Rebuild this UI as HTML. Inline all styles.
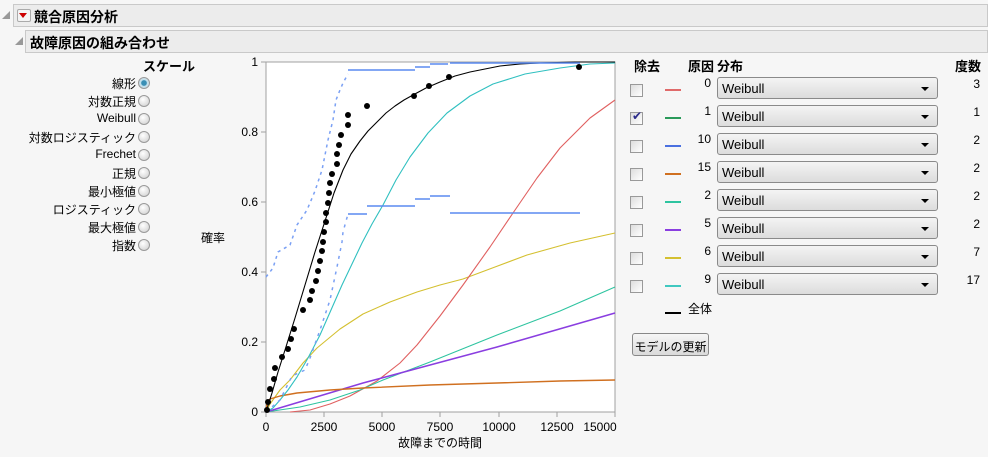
<!DOCTYPE html>
<html><head><meta charset="utf-8"><style>
body{margin:0;width:988px;height:457px;background:#f6f6f6;font-family:"Liberation Sans","Noto Sans CJK JP",sans-serif;font-size:12px;color:#000;position:relative;overflow:hidden}
.a{position:absolute;white-space:nowrap}
.hdr{position:absolute;background:#ececec;border:1px solid #c9c9c9;font-weight:bold;font-size:14px;box-sizing:border-box}
.tri{position:absolute;width:0;height:0;border-left:8px solid transparent;border-bottom:8px solid #999}
.lab{position:absolute;right:852px;text-align:right;white-space:nowrap}
.rad{position:absolute;left:138px;width:10px;height:10px;border-radius:50%;border:1px solid #9a9a9a;background:radial-gradient(circle at 40% 35%,#fff,#ccc)}
.dd{position:absolute;left:717px;width:221px;height:22px;box-sizing:border-box;border:1px solid #8a8a8a;border-radius:3px;background:linear-gradient(#f4f4f4,#dcdcdc);padding:3px 0 0 4px;font-size:13px}
.dd:after{content:"";position:absolute;right:8px;top:9px;border-left:4px solid transparent;border-right:4px solid transparent;border-top:4px solid #000}
.cb{position:absolute;left:630px;width:11px;height:11px;border:1px solid #999;background:linear-gradient(135deg,#ddd,#fff)}
.ln{position:absolute;left:665px;width:16px;height:2px}
.num{position:absolute;right:277px;text-align:right}
.cnt{position:absolute;right:8px;text-align:right}
</style></head><body>
<div class="tri" style="left:2px;top:11px"></div>
<div class="hdr" style="left:13px;top:4px;width:975px;height:23px;padding:2px 0 0 20px">競合原因分析</div>
<div class="a" style="left:17px;top:9px;width:12px;height:11px;border:1px solid #aaa;border-radius:2px;background:#f4f4f4"></div>
<div class="a" style="left:19px;top:13px;border-left:4px solid transparent;border-right:4px solid transparent;border-top:5px solid #c00"></div>
<div class="tri" style="left:15px;top:37px"></div>
<div class="hdr" style="left:25px;top:30px;width:963px;height:23px;padding:2px 0 0 4px">故障原因の組み合わせ</div>

<div class="a" style="left:143px;top:56px;font-weight:bold;font-size:13px">スケール</div>
<div class="lab" style="top:75px">線形</div><div class="rad" style="top:77px;background:radial-gradient(circle,#3a8fb5 35%,#bfe0ee 45%,#ddd)"></div>
<div class="lab" style="top:93px">対数正規</div><div class="rad" style="top:95px"></div>
<div class="lab" style="top:111px">Weibull</div><div class="rad" style="top:113px"></div>
<div class="lab" style="top:129px">対数ロジスティック</div><div class="rad" style="top:131px"></div>
<div class="lab" style="top:147px">Frechet</div><div class="rad" style="top:149px"></div>
<div class="lab" style="top:165px">正規</div><div class="rad" style="top:167px"></div>
<div class="lab" style="top:183px">最小極値</div><div class="rad" style="top:185px"></div>
<div class="lab" style="top:201px">ロジスティック</div><div class="rad" style="top:203px"></div>
<div class="lab" style="top:219px">最大極値</div><div class="rad" style="top:221px"></div>
<div class="lab" style="top:237px">指数</div><div class="rad" style="top:239px"></div>
<div class="a" style="left:201px;top:229px">確率</div>

<svg class="a" style="left:0;top:0" width="988" height="457" font-family="Liberation Sans, sans-serif" font-size="12">
<rect x="266" y="62" width="349" height="350" fill="#fff" stroke="#a0a0a0"/>
<g stroke="#a0a0a0"><line x1="261" y1="62" x2="266" y2="62"/><line x1="261" y1="132" x2="266" y2="132"/><line x1="261" y1="202" x2="266" y2="202"/><line x1="261" y1="272" x2="266" y2="272"/><line x1="261" y1="342" x2="266" y2="342"/><line x1="261" y1="412" x2="266" y2="412"/>
<line x1="266" y1="412" x2="266" y2="417"/><line x1="324" y1="412" x2="324" y2="417"/><line x1="382" y1="412" x2="382" y2="417"/><line x1="440" y1="412" x2="440" y2="417"/><line x1="499" y1="412" x2="499" y2="417"/><line x1="557" y1="412" x2="557" y2="417"/><line x1="615" y1="412" x2="615" y2="417"/></g>
<g text-anchor="end"><text x="258" y="66">1</text><text x="258" y="136">0.8</text><text x="258" y="206">0.6</text><text x="258" y="276">0.4</text><text x="258" y="346">0.2</text><text x="258" y="416">0</text></g>
<g text-anchor="middle"><text x="266" y="431">0</text><text x="324" y="431">2500</text><text x="382" y="431">5000</text><text x="440" y="431">7500</text><text x="499" y="431">10000</text><text x="557" y="431">12500</text><text x="600" y="431">15000</text>
<text x="440" y="447" font-family="Liberation Sans, Noto Sans CJK JP, sans-serif">故障までの時間</text></g>
<g fill="none" stroke-width="1.1" stroke-linejoin="round">
<polyline stroke="#d4c030" points="266,412 270,404 280,390 290,380 303,363 317,348 340,329 363,314 390,302 417,292 440,285 463,279 495,267 527,255 570,243 615,233"/>
<polyline stroke="#e06060" points="290,412 310,410 330,404 350,396 377,381 400,363 417,345 440,316 463,285 490,247 513,213 537,178 560,148 590,118 615,100"/>
<polyline stroke="#2ec4a0" points="266,412 300,407 330,400 360,390 383,380 430,362 497,335 560,311 615,287"/>
<polyline stroke="#8a3ee0" stroke-width="1.6" points="266,412 363,383 497,347 615,313"/>
<polyline stroke="#d07020" stroke-width="1.4" points="266,410 267,404 270,399 280,396 297,393 330,390 363,388 430,385 497,383 560,381 615,380"/>
<polyline stroke="#30c0c0" points="266,412 273,408 280,400 288,390 297,377 308,358 320,335 331,310 342,285 352,264 362,243 372,224 383,205 396,180 410,157 428,133 447,113 470,96 493,84 525,74 560,68 590,64 615,63"/>
<polyline stroke="#000" points="266,412 272,393 278,372 285,350 295,318 305,285 315,252 325,221 334,193 343,170 351,154 360,141 368,131 377,122 386,113 395,106 404,100 413,95 426,88 440,82 455,76 470,72 485,69 500,66 520,64 540,63 575,62 615,62"/>
</g>
<g stroke="#5a8af0" stroke-width="1.5" fill="none">
<polyline stroke-dasharray="3,4" stroke="#7aa0f4" points="266,277 273,268 278,252 290,245 297,225 307,210 315,191 322,170 328,140 333,120 336,100 340,90 343,83 348,74"/>
<line x1="348" y1="70" x2="415" y2="70"/><line x1="415" y1="67" x2="430" y2="67"/><line x1="430" y1="64" x2="448" y2="64"/><line x1="450" y1="63" x2="580" y2="63"/>
<polyline stroke-dasharray="3,5" stroke="#7aa0f4" points="266,412 280,400 292,376 305,370 310,358 320,330 330,300 337,267 342,242 343,232 348,214"/>
<line x1="348" y1="214" x2="367" y2="214"/><line x1="367" y1="206" x2="415" y2="206"/><line x1="415" y1="199" x2="430" y2="199"/><line x1="430" y1="196" x2="450" y2="196"/><line x1="450" y1="213" x2="580" y2="213"/>
</g>
<g fill="#000">
<circle cx="367" cy="106" r="3"/><circle cx="414" cy="96" r="3"/><circle cx="429" cy="86" r="3"/><circle cx="449" cy="77" r="3"/><circle cx="579" cy="67" r="3"/>
<circle cx="348" cy="115" r="3"/><circle cx="348" cy="125" r="3"/><circle cx="341" cy="135" r="3"/><circle cx="339" cy="145" r="3"/><circle cx="337" cy="154" r="3"/><circle cx="337" cy="164" r="3"/><circle cx="332" cy="174" r="3"/><circle cx="330" cy="183" r="3"/><circle cx="329" cy="193" r="3"/><circle cx="328" cy="203" r="3"/><circle cx="326" cy="213" r="3"/><circle cx="326" cy="222" r="3"/><circle cx="324" cy="232" r="3"/><circle cx="323" cy="242" r="3"/><circle cx="322" cy="251" r="3"/><circle cx="320" cy="261" r="3"/><circle cx="318" cy="271" r="3"/><circle cx="316" cy="281" r="3"/><circle cx="312" cy="291" r="3"/><circle cx="310" cy="300" r="3"/><circle cx="303" cy="310" r="3"/><circle cx="294" cy="329" r="3"/><circle cx="291" cy="339" r="3"/><circle cx="288" cy="349" r="3"/><circle cx="282" cy="357" r="3"/><circle cx="275" cy="368" r="3"/><circle cx="274" cy="379" r="3"/><circle cx="270" cy="389" r="3"/><circle cx="268" cy="402" r="3"/><circle cx="267" cy="410" r="3"/>
</g>
</svg>

<div class="a" style="left:634px;top:56px;font-weight:bold;font-size:13px">除去</div>
<div class="a" style="left:688px;top:56px;font-weight:bold;font-size:13px">原因</div>
<div class="a" style="left:717px;top:56px;font-weight:bold;font-size:13px">分布</div>
<div class="a" style="left:955px;top:56px;font-weight:bold;font-size:13px">度数</div>

<div class="cb" style="top:84px"></div><div class="ln" style="top:89px;background:#e06a6a"></div><div class="num" style="top:76px">0</div><div class="dd" style="top:77px">Weibull</div><div class="cnt" style="top:77px">3</div>
<div class="cb" style="top:112px"></div><div class="a" style="left:632px;top:109px;color:#2a2a8a;font-size:12px">✔</div><div class="ln" style="top:117px;background:#2a9a5a"></div><div class="num" style="top:104px">1</div><div class="dd" style="top:105px">Weibull</div><div class="cnt" style="top:105px">1</div>
<div class="cb" style="top:140px"></div><div class="ln" style="top:145px;background:#4a70e0"></div><div class="num" style="top:132px">10</div><div class="dd" style="top:133px">Weibull</div><div class="cnt" style="top:133px">2</div>
<div class="cb" style="top:168px"></div><div class="ln" style="top:173px;background:#d07020"></div><div class="num" style="top:160px">15</div><div class="dd" style="top:161px">Weibull</div><div class="cnt" style="top:161px">2</div>
<div class="cb" style="top:196px"></div><div class="ln" style="top:201px;background:#2ec4a0"></div><div class="num" style="top:188px">2</div><div class="dd" style="top:189px">Weibull</div><div class="cnt" style="top:189px">2</div>
<div class="cb" style="top:224px"></div><div class="ln" style="top:229px;background:#8a3ee0"></div><div class="num" style="top:216px">5</div><div class="dd" style="top:217px">Weibull</div><div class="cnt" style="top:217px">2</div>
<div class="cb" style="top:252px"></div><div class="ln" style="top:257px;background:#d4c030"></div><div class="num" style="top:244px">6</div><div class="dd" style="top:245px">Weibull</div><div class="cnt" style="top:245px">7</div>
<div class="cb" style="top:280px"></div><div class="ln" style="top:285px;background:#40c8c0"></div><div class="num" style="top:272px">9</div><div class="dd" style="top:273px">Weibull</div><div class="cnt" style="top:273px">17</div>
<div class="ln" style="top:312px;background:#000"></div><div class="a" style="left:688px;top:300px">全体</div>
<div class="a" style="left:632px;top:333px;width:77px;height:23px;box-sizing:border-box;border:1px solid #888;border-radius:3px;background:linear-gradient(#f6f6f6,#dadada);text-align:center;padding-top:4px;font-size:12px">モデルの更新</div>
</body></html>
